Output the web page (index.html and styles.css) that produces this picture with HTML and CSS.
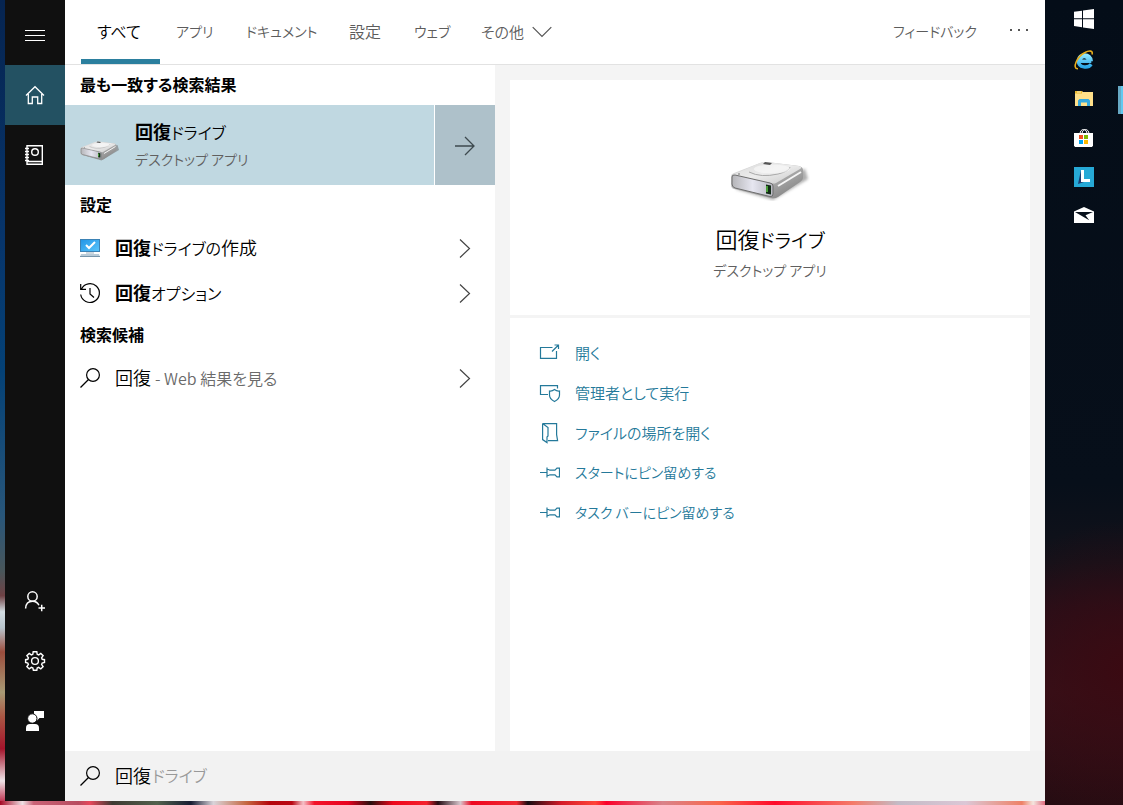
FILE: index.html
```html
<!DOCTYPE html>
<html lang="ja">
<head>
<meta charset="utf-8">
<title>検索</title>
<link rel="stylesheet" href="styles.css">
</head>
<body>
<svg class="defs" aria-hidden="true">
  <defs>
    <linearGradient id="top" x1="0" y1="0" x2="1" y2="1"><stop offset="0" stop-color="#d8d8d8"/><stop offset=".5" stop-color="#ececec"/><stop offset="1" stop-color="#c8c8c8"/></linearGradient>
    <linearGradient id="front" x1="0" y1="0" x2="1" y2="0"><stop offset="0" stop-color="#b5b5b8"/><stop offset=".5" stop-color="#e6e6f0"/><stop offset="1" stop-color="#b9b9c2"/></linearGradient>
    <linearGradient id="side" x1="0" y1="0" x2="1" y2="1"><stop offset="0" stop-color="#ededed"/><stop offset=".55" stop-color="#aaa"/><stop offset="1" stop-color="#777"/></linearGradient>
    <linearGradient id="screen" x1="0" y1="0" x2="1" y2="1"><stop offset="0" stop-color="#2496e6"/><stop offset="1" stop-color="#58c4fb"/></linearGradient>
    <linearGradient id="ie" x1="0" y1="0" x2="0" y2="1"><stop offset="0" stop-color="#8ee6ff"/><stop offset="1" stop-color="#2ba8e8"/></linearGradient>
    <filter id="soft" x="-20%" y="-20%" width="140%" height="140%"><feGaussianBlur stdDeviation="1.5"/></filter>
    <symbol id="drive" viewBox="0 0 80 40">
      <path d="M5 28L43 39 78 18 75 8Z" fill="#777" opacity=".6" filter="url(#soft)"/>
      <path d="M1 15Q1 13 4 12L30 2Q33 1 37 1L69 5Q73 6 73 9V17Q73 19 70 21L48 36Q45 38 41 37L4 28Q1 27 1 24Z" fill="url(#side)"/>
      <path d="M2 14L30 2Q33 1 37 1L69 5Q73 6 70 8L46 22Q44 23 40 22Z" fill="url(#top)"/>
      <path d="M19 11Q31 17 48 13 60 10 60 6" fill="none" stroke="#a9a9a9"/>
      <ellipse cx="42" cy="8" rx="18" ry="4.500" fill="#fafafa" opacity=".6"/>
      <path d="M35 1l7 1-2 2-7-1z" fill="#555"/>
      <path d="M2 16Q2 13.500 5 14L40 22Q43 22.500 43 25V33Q43 36 40 35.500L5 27Q2 26 2 23Z" fill="url(#front)" stroke="#6d6d6d"/>
      <path d="M36 23.500l5 1v9l-5-1z" fill="#122b16"/><path d="M37 25v6" stroke="#5cc544" stroke-width="1.500"/>
      <path d="M48 25L71 11" stroke="#f5f5f5" stroke-width="2"/><circle cx="9" cy="13" r="1" fill="#999"/>
    </symbol>
    <symbol id="search" viewBox="0 0 20 20"><circle cx="13" cy="7" r="6.400" fill="none" stroke="currentColor" stroke-width="1.200"/><path d="M8.500 11.500L.5 19.500" stroke="currentColor" stroke-width="1.300"/></symbol>
    <symbol id="chevron" viewBox="0 0 12 20"><path d="M1 1.500l9.500 9L1 19.500" fill="none" stroke="currentColor" stroke-width="1.200"/></symbol>
    <symbol id="pin" viewBox="0 0 20 20"><path d="M0 10.500h7M7 5.500v10M7 7.500h1.500l1.500.7h5l2-2h2.500v8.600H17l-2-2h-5l-1.500.7H7" fill="none" stroke="currentColor" stroke-width="1.200"/></symbol>
  </defs>
</svg>

<div class="desktop">
  <main class="panel">
    <nav class="rail" aria-label="メニュー">
      <button class="rail-btn" aria-label="展開"><svg width="20" height="20" viewBox="0 0 20 20"><path d="M0 5.500h20M0 10.500h20M0 15.500h20" stroke="#fff" fill="none"/></svg></button>
      <button class="rail-btn is-active" aria-label="ホーム"><svg width="20" height="20" viewBox="0 0 20 20"><path d="M1 10.500L10 1.700l9 8.800M3.300 9v9.500h4V12h5.400v6.500h4V9" fill="none" stroke="#fff" stroke-width="1.300"/></svg></button>
      <button class="rail-btn" aria-label="ノートブック"><svg width="20" height="20" viewBox="0 0 20 20"><path d="M2 .7h15.300v18.600H2zM2 16.500h15M0 3.500h4M0 6.500h4M0 9.500h4M0 12.500h4M0 15.500h4" fill="none" stroke="#fff" stroke-width="1.400"/><circle cx="10" cy="7" r="3.300" fill="none" stroke="#fff" stroke-width="1.400"/></svg></button>
      <span class="rail-space"></span>
      <button class="rail-btn" aria-label="サインイン"><svg width="20" height="20" viewBox="0 0 20 20"><path d="M.6 17.500C.8 13 3.500 10.300 7.500 10.300c3.200 0 5.400 1.800 6.400 4M13.500 17h6.500M16.700 13.800v6.400" fill="none" stroke="#fff" stroke-width="1.500"/><circle cx="7.500" cy="5.500" r="4.700" fill="none" stroke="#fff" stroke-width="1.500"/></svg></button>
      <button class="rail-btn" aria-label="設定"><svg width="20" height="20" viewBox="0 0 20 20"><path d="M8.200.7h3.600l.4 2.600 1.500.6 2.100-1.500 2.300 2.300-1.500 2.200.6 1.400 2.300.4v2.800l-2.300.5-.6 1.500 1.500 2.100-2.300 2.300-2.200-1.500-1.400.6-.4 2.300H8.400L7.900 17l-1.500-.6-2.200 1.500-2.300-2.300 1.500-2.100-.6-1.500-2.200-.5V8.700l2.200-.4.6-1.400L1.900 4.700l2.300-2.300 2.200 1.500 1.400-.6z" fill="none" stroke="#fff" stroke-width="1.400"/><circle cx="10" cy="10" r="3.400" fill="none" stroke="#fff" stroke-width="1.400"/></svg></button>
      <button class="rail-btn" aria-label="フィードバック"><svg width="20" height="20" viewBox="0 0 20 20" fill="#fff"><path d="M1 20v-3q0-4 4-4h5q4 0 4 4v3zM9 0h10v7h-4.500L12 9.500V7L9 3z"/><circle cx="7.300" cy="7.500" r="4.700" stroke="#111"/></svg></button>
    </nav>

    <div class="content">
      <header class="tabs">
        <button class="tab is-active">すべて</button>
        <button class="tab kana">アプリ</button>
        <button class="tab kana">ドキュメント</button>
        <button class="tab">設定</button>
        <button class="tab kana">ウェブ</button>
        <button class="tab"><span class="more-label">その他</span><svg width="20" height="11" viewBox="0 0 20 11"><path d="M.7 1.200l9.300 9.300 9.300-9.300" fill="none" stroke="#555" stroke-width="1.200"/></svg></button>
        <button class="tab kana tab-feedback">フィードバック</button>
        <button class="tab" aria-label="その他のオプション"><svg width="20" height="4" viewBox="0 0 20 4" fill="#555"><path d="M1 0h2v2H1zM9 0h2v2H9zM17 0h2v2h-2z"/></svg></button>
      </header>

      <div class="body">
        <section class="results">
          <h2 class="group">最も一致する検索結果</h2>
          <div class="best">
            <button class="best-main">
              <svg class="best-icon" width="40" height="20"><use href="#drive"/></svg>
              <span class="best-text"><span class="name"><b>回復</b><span class="name-kana">ドライブ</span></span><span class="kind">デスクトップ アプリ</span></span>
            </button>
            <button class="best-go" aria-label="詳細"><svg width="20" height="20" viewBox="0 0 20 20"><path d="M0 11h19M10 2l9 9-9 9" fill="none" stroke="#3e4a4f" stroke-width="1.300"/></svg></button>
          </div>
          <h2 class="group">設定</h2>
          <button class="item">
            <svg width="20" height="20" viewBox="0 0 20 20"><path d="M0 1h20v13H0z" fill="#3b82b5"/><path d="M1 2h18v11H1z" fill="url(#screen)"/><path d="M6 7l3 3 6-6" fill="none" stroke="#fff" stroke-width="2"/><path d="M6 14h8v2H6z" fill="#cfd8df"/><path d="M1 16h18l1 3H0z" fill="#b9cbd8"/><path d="M0 18h20v1H0z" fill="#7896ab"/></svg>
            <span class="name"><b>回復</b><span class="name-kana">ドライブの</span>作成</span><svg class="chev" width="12" height="20"><use href="#chevron"/></svg>
          </button>
          <button class="item">
            <svg width="20" height="20" viewBox="0 0 20 20"><path d="M1.500 6A9.400 9.400 0 1 1 .7 11.500M.7 1v5.300H6M10 5v6l4 3.500" fill="none" stroke="#000" stroke-width="1.200"/></svg>
            <span class="name"><b>回復</b><span class="name-kana">オプション</span></span><svg class="chev" width="12" height="20"><use href="#chevron"/></svg>
          </button>
          <h2 class="group">検索候補</h2>
          <button class="item">
            <svg width="20" height="20"><use href="#search"/></svg>
            <span class="name">回復 <small>- Web 結果を見る</small></span><svg class="chev" width="12" height="20"><use href="#chevron"/></svg>
          </button>
        </section>

        <section class="detail">
          <div class="hero">
            <svg width="80" height="40"><use href="#drive"/></svg>
            <h1 class="hero-title">回復<span class="hero-kana">ドライブ</span></h1>
            <p class="kind">デスクトップ アプリ</p>
          </div>
          <div class="actions">
            <a class="action" href="#"><svg width="20" height="20" viewBox="0 0 20 20"><path d="M12.500 5.500h-12v10.900h16V9M12 9.500L18.500 3M14.500 3h4v4" fill="none" stroke="currentColor" stroke-width="1.200"/></svg>開く</a>
            <a class="action" href="#"><svg width="20" height="20" viewBox="0 0 20 20"><path d="M8 12.500H.5V3.600h17v3M14.500 7.500q2.500 2 5 1.500v4q0 4-5 6.500-5-2.500-5-6.500V9q2.500.5 5-1.500z" fill="none" stroke="currentColor" stroke-width="1.200"/></svg>管理者として実行</a>
            <a class="action" href="#"><svg width="20" height="20" viewBox="0 0 20 20"><path d="M2.600 1.600h14v11l1 6H8M2.600 1.600v16l4.400 3V15l1-1V5.500L2.600 1.600" fill="none" stroke="currentColor" stroke-width="1.200"/></svg>ファイルの場所を開く</a>
            <a class="action kana" href="#"><svg width="20" height="20"><use href="#pin"/></svg>スタートにピン留めする</a>
            <a class="action kana" href="#"><svg width="20" height="20"><use href="#pin"/></svg>タスク バーにピン留めする</a>
          </div>
        </section>
      </div>

      <label class="searchbar">
        <svg width="20" height="20"><use href="#search"/></svg>
        <span class="query"><input class="query-input" type="text" value="回復" aria-label="検索"><span class="query-hint">ドライブ</span></span>
      </label>
    </div>
  </main>

  <aside class="taskbar" aria-label="タスク バー">
    <button class="task task-start" aria-label="スタート"><svg width="20" height="20" viewBox="0 0 20 20" fill="#fff"><path d="M0 2.800L8 1.700V9.300H0zM9 1.500L20 0v9.300H9zM0 10.300h8v8L0 17.100zM9 10.300h11V20L9 18.500z"/></svg></button>
    <button class="task" aria-label="Internet Explorer"><svg width="20" height="20" viewBox="0 0 20 20"><path d="M17.300 11.300H6.200C6.200 5.200 14.200 5.200 14.600 10.800M17.200 14.200C14.500 18.300 4.400 18.300 4.400 10.700S17 2.500 17.300 11.300" fill="none" stroke="url(#ie)" stroke-width="3.400"/><path d="M4 18.800C-2.500 19 3 6.500 11 2.500 15 .3 19.500.3 18 4.500" fill="none" stroke="#e8ad1c" stroke-width="1.600"/></svg></button>
    <button class="task is-open" aria-label="エクスプローラー"><svg width="20" height="20" viewBox="0 0 20 20"><path d="M1 2h7l1 1h10v14H1z" fill="#ffe08a"/><path d="M1 2h7v2.500H1z" fill="#e9b82e"/><path d="M3 2.500h4v1H3z" fill="#fff3c9"/><path d="M4 17v-5.500L5.500 10h9l1.500 1.500V17h-3v-3.500H7V17z" fill="#35a9df"/></svg></button>
    <button class="task" aria-label="Microsoft Store"><svg width="20" height="20" viewBox="0 0 20 20"><path d="M6 6C6 0 13 0 13 6M8 6c0-6 7-6 7 0" fill="none" stroke="#fff"/><path d="M0 5h19v12.500l-1 1.500H1l-1-1.500z" fill="#fff"/><path d="M5 7h4v4H5z" fill="#f25022"/><path d="M10 7h4v4h-4z" fill="#7fba00"/><path d="M5 12h4v4H5z" fill="#00a4ef"/><path d="M10 12h4v4h-4z" fill="#ffb900"/></svg></button>
    <button class="task" aria-label="L"><svg width="20" height="20" viewBox="0 0 20 20"><path d="M0 0h20v20H0z" fill="#26a9d6"/><path d="M7 3L4 17l6-2-3-1z" fill="#1c3c70"/><path d="M7 3h3v9h6v3H7z" fill="#fff"/></svg></button>
    <button class="task" aria-label="メール"><svg width="20" height="20" viewBox="0 0 20 20"><path d="M0 5.500L10 1l10 4.500V17H0z" fill="#fff"/><path d="M1 6h18l-7.500 3.200 3.700 5z" fill="#07101b"/></svg></button>
  </aside>
</div>
</body>
</html>
```
FILE: styles.css
```css
* { box-sizing: border-box; }
body {
  margin: 0;
  font-family: "Noto Sans CJK JP", sans-serif;
  font-weight: 350;
  font-size: 15px;
  font-feature-settings: "palt";
  color: #000;
}
button, input {
  font: inherit;
  font-feature-settings: inherit;
  color: inherit;
  border: 0;
  padding: 0;
  background: none;
  text-align: left;
}
h1, h2, p { margin: 0; }
svg { flex: none; display: block; overflow: visible; }
.defs { position: absolute; width: 0; height: 0; }

.desktop {
  display: flex;
  min-height: 100vh;
  background:
    linear-gradient(90deg, #a50824 0, #eee0e4 2%, #ca6377 3%, #b84c60 7%, #e8485c 8%, #3e3a33 10%, #52614d 14%, #171c32 17%, #d9d4da 19%, #c4653e 22%, #b5050c 24%, #b90814 26%, #f4c1c8 27%, #f3142a 28%, #e80320 31%, #27100e 33%, #ee071c 35%, #f5222e 38%, #250c13 39%, #d8c7ce 41%, #ee0620 42%, #f02931 46%, #160d12 47%, #d51a28 50%, #ff4538 53%, #fb002a 54%, #d9838a 59%, #f9664b 64%, #ff0a2b 69%, #f47b69 76%, #c3bbc6 80%, #dcc7d6 86%, #ee8167 91%, #f4e5df 92%, #cf0029 94%, #a50016 100%) bottom / 100% 4px no-repeat,
    linear-gradient(#062450 0, #07356b 30%, #044176 46%, #28567a 64%, #49565a 71%, #6e4144 74%, #d3dde2 76%, #b8c4cc 78%, #9b4d3d 81%, #a89a74 86%, #aa5744 89%, #a4142b 93%, #eee4e8 97%, #b61838 100%);
}
.panel { flex: 1; display: flex; margin: 0 0 4px 5px; min-width: 0; }

.rail { width: 60px; padding: 5px 0 50px; background: #101010; display: flex; flex-direction: column; }
.rail-btn { height: 60px; display: flex; align-items: center; justify-content: center; }
.rail-btn.is-active { background: #235162; }
.rail-space { flex: 1; }

.content { flex: 1; min-width: 0; display: flex; flex-direction: column; background: #fff; }
.tabs {
  height: 65px;
  display: grid;
  grid-template-columns: 79px 70px 103px 65px 67px auto 1fr auto;
  padding-left: 16px;
  border-bottom: 1px solid #e2e2e2;
}
.tab { display: flex; align-items: center; gap: 8px; padding: 3px 16px 0; font-size: 16px; white-space: nowrap; color: #5c5c5c; border-bottom: 5px solid transparent; }
.tab.is-active { color: #000; border-color: #2b7f9e; }
.more-label { font-size: 15px; }
.tab.kana, .kana { font-size: 14px; }
.tab-feedback { justify-self: end; }

.body { flex: 1; display: grid; grid-template-columns: 430px 1fr; }
.group { height: 40px; padding-left: 15px; font-size: 16px; line-height: 38px; font-weight: 600; }
.best { display: flex; gap: 1px; height: 80px; }
.best-main { flex: 1; display: flex; align-items: center; gap: 15px; padding-left: 15px; background: #c0d8e1; }
.best-icon { margin-top: 12px; }
.best-go { width: 60px; display: flex; align-items: center; justify-content: center; background: #aec1ca; }
.best-text { display: flex; flex-direction: column; padding-bottom: 2px; }
.name { font-size: 18px; line-height: 28px; }
.name b { font-weight: 700; }
.name-kana { font-size: 16px; }
.name small { font-size: 16px; color: #6a6a6a; }
.kind { font-size: 14px; line-height: 26px; color: #606060; }
.item { width: 100%; height: 45px; display: flex; align-items: center; gap: 15px; padding: 0 24px 0 15px; }
.chev { margin-left: auto; color: #444; }

.detail { display: flex; flex-direction: column; gap: 3px; padding: 15px 15px 0; background: #f4f4f4; }
.hero { height: 235px; display: flex; flex-direction: column; align-items: center; padding-top: 81px; background: #fff; }
.hero-title { margin-top: 20px; font-size: 22px; line-height: 34px; font-weight: 350; }
.hero-kana { font-size: 19px; }
.actions { flex: 1; padding: 15px 30px; background: #fff; }
.action { display: flex; align-items: center; gap: 15px; height: 40px; padding-bottom: 2px; color: #24799a; text-decoration: none; }

.searchbar { height: 50px; display: flex; align-items: center; gap: 15px; padding-left: 15px; background: #f2f2f2; }
.query { display: flex; font-size: 18px; line-height: 28px; padding-bottom: 2px; }
.query-input { width: 37px; height: 28px; outline: 0; }
.query-hint { font-size: 16px; color: #999; }

.taskbar {
  width: 78px;
  background: radial-gradient(circle at 78px 670px, #3a0a12 0, #380b1400 150px), linear-gradient(#040d18 0, #070f1a 60%, #12121a 70%, #24101a 76%, #35121a 86%, #260c12 100%);
}
.task { position: relative; width: 100%; height: 39px; display: flex; align-items: center; justify-content: center; }
.task-start { height: 38px; margin-bottom: 2px; }
.task.is-open::after { content: ""; position: absolute; right: 0; top: 7px; width: 5px; height: 28px; background: linear-gradient(90deg, #67a9c4 60%, #62c9f0 60%); }
```
